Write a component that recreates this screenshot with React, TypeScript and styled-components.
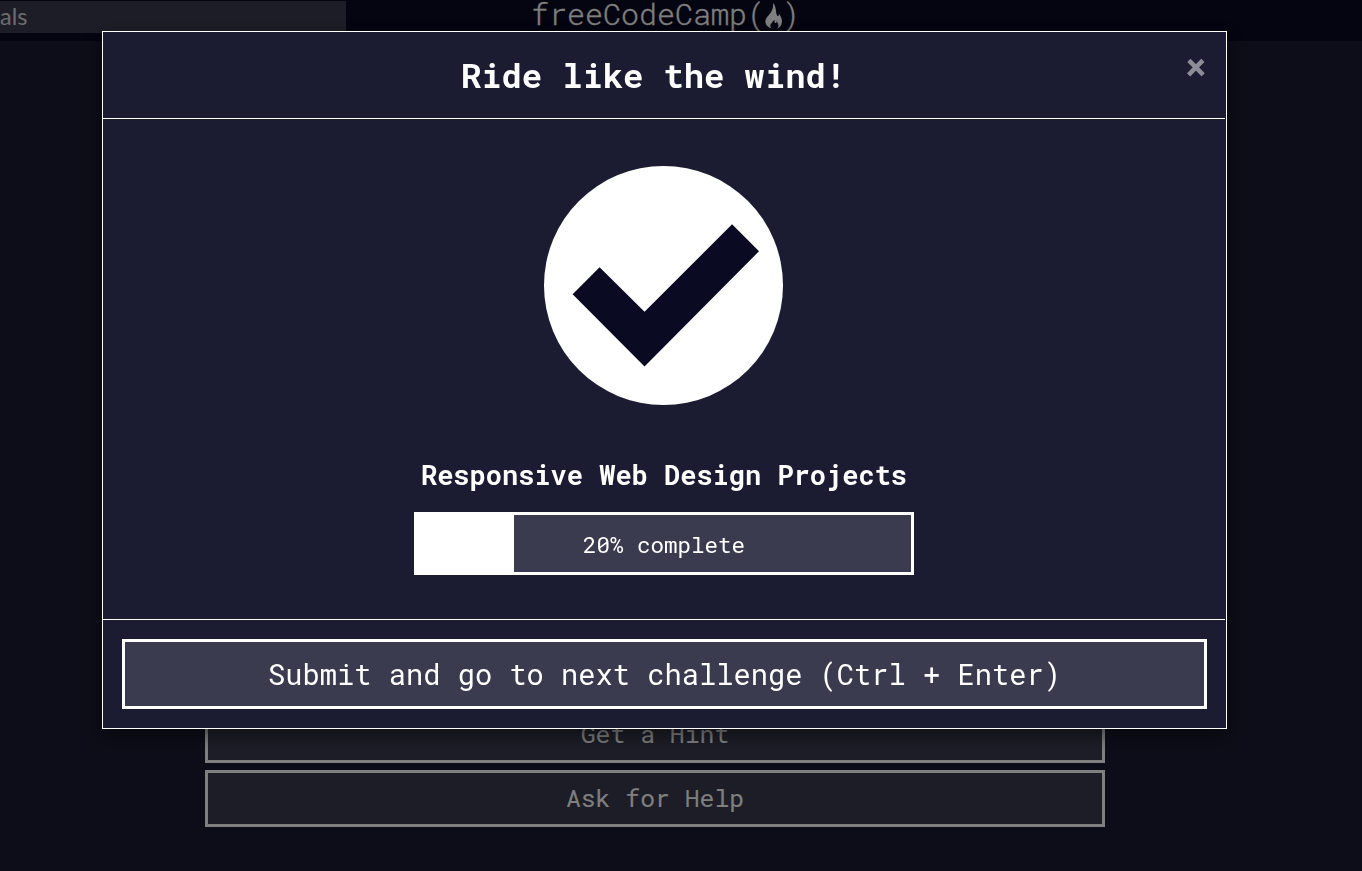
import React from 'react';
import styled, { createGlobalStyle } from 'styled-components';

const mono = `'Roboto Mono', 'DejaVu Sans Mono', 'Liberation Mono', monospace`;

const GlobalStyle = createGlobalStyle`
  * { box-sizing: border-box; }
  body { margin: 0; background: #1b1b32; overflow: hidden; }
`;

const Page = styled.div`
  height: 871px;
  display: flex;
  flex-direction: column;
  background: #1b1b32;
  color: #fff;
  font-family: ${mono};
`;

const NavBar = styled.header`
  height: 41px;
  flex: none;
  display: flex;
  align-items: flex-start;
  background: #0a0a23;
`;

const SearchField = styled.div`
  width: 346px;
  height: 32px;
  margin-top: 1px;
  background: #3b3b4f;
  color: #d8d8dc;
  font: 23.5px/31px Lato, sans-serif;
`;

const Brand = styled.div`
  display: flex;
  align-items: flex-start;
  margin-left: 185px;
  height: 41px;
  color: #fff;
  font-family: ${mono};
  font-size: 30px;
  font-weight: 300;
  line-height: 28px;
  -webkit-text-stroke: 0.3px #fff;
  white-space: nowrap;

  svg { flex: none; margin: 3px 0 0 0; }
  svg + span { margin-left: -1px; }
`;

const Actions = styled.main`
  flex: 1;
  width: 900px;
  margin-left: 205px;
  padding-bottom: 44px;
  display: flex;
  flex-direction: column;
  justify-content: flex-end;
  gap: 7px;
`;

const Button = styled.button<{ $large?: boolean }>`
  display: block;
  width: 100%;
  height: ${(p) => (p.$large ? 70 : 57)}px;
  padding: 0;
  border: 3px solid #fff;
  border-radius: 0;
  background: #3b3b4f;
  color: #fff;
  font-family: ${mono};
  font-size: ${(p) => (p.$large ? 28.72 : 24.75)}px;
  line-height: 1;
`;

const Backdrop = styled.div`
  position: fixed;
  inset: 0;
  padding: 31px 0 0 102px;
  background: rgba(0, 0, 0, 0.5);
`;

const Dialog = styled.section`
  width: 1125px;
  height: 698px;
  display: flex;
  flex-direction: column;
  border: 1px solid #fff;
  background: #1b1b32;
  color: #fff;
  font-family: ${mono};
  box-shadow: 0 6px 17px rgba(0, 0, 0, 0.5);
`;

const DialogHeader = styled.div`
  height: 87px;
  margin-right: 1px;
  display: flex;
  align-items: flex-start;
  border-bottom: 1px solid #fff;
`;

const Title = styled.h1`
  flex: 1;
  margin: 0;
  padding: 21px 0 0 20px;
  font-size: 33.75px;
  line-height: 44px;
  font-weight: 700;
  text-align: center;
`;

const Close = styled.button`
  width: 41px;
  height: 66px;
  padding: 0 0 0 2px;
  border: 0;
  background: none;
  color: #8d8d98;
  -webkit-text-stroke: 1px #8d8d98;
  font: 900 34px/63px Lato, sans-serif;
  text-align: left;
`;

const DialogBody = styled.div`
  height: 500px;
  padding: 47px 1px 0 0;
  display: flex;
  flex-direction: column;
  align-items: center;

  svg { flex: none; margin-right: 1px; }
`;

const Course = styled.h2`
  margin: 52px 0 0;
  font-size: 27px;
  line-height: 36px;
  font-weight: 700;
`;

const Progress = styled.div`
  width: 500px;
  height: 63px;
  margin-top: 19px;
  display: grid;
  border: 3px solid #fff;
  background: #3b3b4f;
`;

const ProgressFill = styled.div`
  grid-area: 1 / 1;
  width: 97px;
  background: #fff;
`;

const ProgressLabel = styled.span`
  grid-area: 1 / 1;
  place-self: center;
  padding-top: 1px;
  font-size: 22.5px;
  line-height: 30px;
`;

const DialogFooter = styled.div`
  height: 109px;
  padding: 19px 18px 19px 19px;
  margin-right: 1px;
  border-top: 1px solid #fff;
`;

function Flame() {
  return (
    <svg width="18" height="26" viewBox="0 0 18 26" fill="currentColor">
      <path d="M8.2 0C10.5 2.6 10.8 6 11.2 9.5c.2 1.9.8 3.5 1.7 3.6.8.1 1.2-.9.7-2.6 2.4 2.7 3.6 5.6 3.4 8.4-.3 3.2-2.3 5.7-5 6.9 1.1-1.2 1.7-2.4 1.4-4-.2-1.3-1.2-2.2-1.5-3.6-.5 1.3-1 1.9-1.7 1.7-.9-.3-.9-1.5-.5-3.2-2.2 1.3-2.2 2.8-3.6 4-1.500 1.500-.8 3.600.8 5C3.200 24.600.4 22 .4 18.600c0-3.900 3.500-6 5.600-9.400C7.700 6.300 8.400 3.300 8.200 0Z" />
    </svg>
  );
}

function CheckBadge() {
  return (
    <svg width="239" height="239" viewBox="0 0 718 718">
      <circle cx="359" cy="359" r="359" fill="#fff" />
      <path d="M167 304 302 438 565 175 646 256 302 602 86 385Z" fill="#0a0a23" />
    </svg>
  );
}

export default function App() {
  return (
    <>
      <GlobalStyle />
      <Page>
        <NavBar>
          <SearchField>als</SearchField>
          <Brand>
            <span>freeCodeCamp(</span>
            <Flame />
            <span>)</span>
          </Brand>
        </NavBar>
        <Actions>
          <Button>Get a Hint</Button>
          <Button>Ask for Help</Button>
        </Actions>
      </Page>
      <Backdrop>
        <Dialog role="dialog">
          <DialogHeader>
            <Title>Ride like the wind!</Title>
            <Close>×</Close>
          </DialogHeader>
          <DialogBody>
            <CheckBadge />
            <Course>Responsive Web Design Projects</Course>
            <Progress>
              <ProgressFill />
              <ProgressLabel>20% complete</ProgressLabel>
            </Progress>
          </DialogBody>
          <DialogFooter>
            <Button $large>Submit and go to next challenge (Ctrl + Enter)</Button>
          </DialogFooter>
        </Dialog>
      </Backdrop>
    </>
  );
}
